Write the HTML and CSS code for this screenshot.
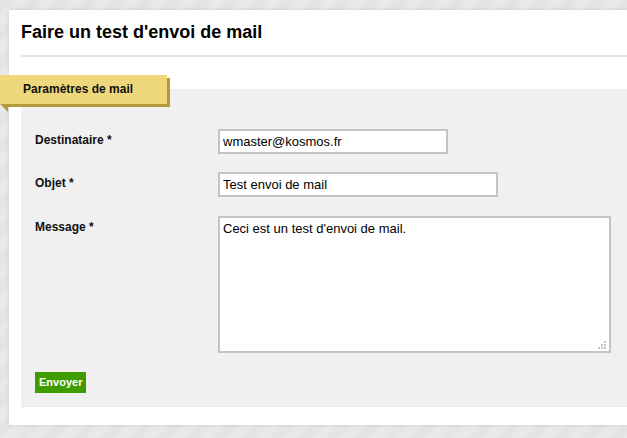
FILE: index.html
```html
<!DOCTYPE html>
<html lang="fr">
<head>
  <meta charset="UTF-8" />
  <title>Faire un test d'envoi de mail</title>
  <link rel="stylesheet" href="styles.css">
</head>
<body>

  <div class="panel">
    <h1 class="panel-title">Faire un test d'envoi de mail</h1>

    <div class="tab">Paramètres de mail</div>

    <form class="mail-form" onsubmit="return false">
      <div class="row">
        <label for="dest">Destinataire *</label>
        <input id="dest" class="field field-dest" type="text" value="wmaster@kosmos.fr" />
      </div>
      <div class="row">
        <label for="objet">Objet *</label>
        <input id="objet" class="field field-obj" type="text" value="Test envoi de mail" />
      </div>
      <div class="row">
        <label for="msg">Message *</label>
        <textarea id="msg" class="field field-msg">Ceci est un test d'envoi de mail.</textarea>
      </div>
      <button type="submit" class="send-btn">Envoyer</button>
    </form>
  </div>

</body>
</html>
```

FILE: styles.css
```css
* {
  box-sizing: border-box;
}

html, body {
  margin: 0;
  padding: 0;
}

body {
  font-family: "Liberation Sans", Arial, sans-serif;
  color: #000;
  background: repeating-linear-gradient(135deg, #e4e4e4 0, #e4e4e4 10px, #e9e9e9 10px, #e9e9e9 20px);
  min-height: 438px;
  padding: 10px 0 13px 9px;
  overflow: hidden;
}

.panel {
  background: #fff;
  box-shadow: 0 0 4px rgba(0, 0, 0, 0.12);
  padding-bottom: 18px;
}

.panel-title {
  margin: 0 0 0 12px;
  padding: 11px 0 12px;
  font-size: 18px;
  line-height: 22px;
  font-weight: bold;
  border-bottom: 2px solid #e3e3e3;
}

.tab {
  position: relative;
  z-index: 1;
  width: 167px;
  height: 29px;
  margin: 18px 0 -15px -9px;
  padding-left: 23px;
  background: #efd87b;
  box-shadow: 3px 3px 0 #b39b3c;
  font-size: 12px;
  font-weight: bold;
  line-height: 29px;
  color: #111;
}

/* petit pli sous l'onglet */
.tab::after {
  content: "";
  position: absolute;
  left: 0;
  top: 29px;
  border-top: 8px solid #b39b3c;
  border-left: 8px solid transparent;
}

.mail-form {
  margin-left: 12px;
  background: #f0f0f0;
  border-bottom: 1px solid #e8e8e8;
  padding: 40px 0 13px 14px;
}

.row {
  display: grid;
  grid-template-columns: 183px 1fr;
  margin-bottom: 18px;
}

.row:nth-child(2) {
  margin-bottom: 19px;
}

.row:nth-child(3) {
  margin-bottom: 19px;
}

.row label {
  padding-top: 4px;
  font-size: 12px;
  line-height: 15px;
  font-weight: bold;
  color: #111;
}

.field {
  font-family: "Liberation Sans", Arial, sans-serif;
  font-size: 13px;
  color: #000;
  background: #fff;
  border: 2px solid #c4c4c4;
  padding: 0 3px;
  outline: none;
  margin: 0;
}

.field-dest {
  width: 230px;
  height: 25px;
}

.field-obj {
  width: 280px;
  height: 25px;
}

/* poignée de redimensionnement en petits carrés */
.field-msg {
  width: 393px;
  height: 137px;
  padding: 3px;
  line-height: 16px;
  resize: none;
  background-color: #fff;
  background-image:
    linear-gradient(#c4c4c4, #c4c4c4),
    linear-gradient(#c4c4c4, #c4c4c4),
    linear-gradient(#c4c4c4, #c4c4c4),
    linear-gradient(#c4c4c4, #c4c4c4),
    linear-gradient(#c4c4c4, #c4c4c4),
    linear-gradient(#c4c4c4, #c4c4c4);
  background-size: 2px 2px;
  background-repeat: no-repeat;
  background-position:
    right 3px bottom 8px,
    right 3px bottom 5px,
    right 6px bottom 5px,
    right 3px bottom 2px,
    right 6px bottom 2px,
    right 9px bottom 2px;
}

.send-btn {
  display: block;
  height: 21px;
  padding: 0 4px;
  border: none;
  background: #3f9c00;
  color: #fff;
  font-family: "Liberation Sans", Arial, sans-serif;
  font-size: 11px;
  font-weight: bold;
  line-height: 21px;
  cursor: pointer;
}
```
